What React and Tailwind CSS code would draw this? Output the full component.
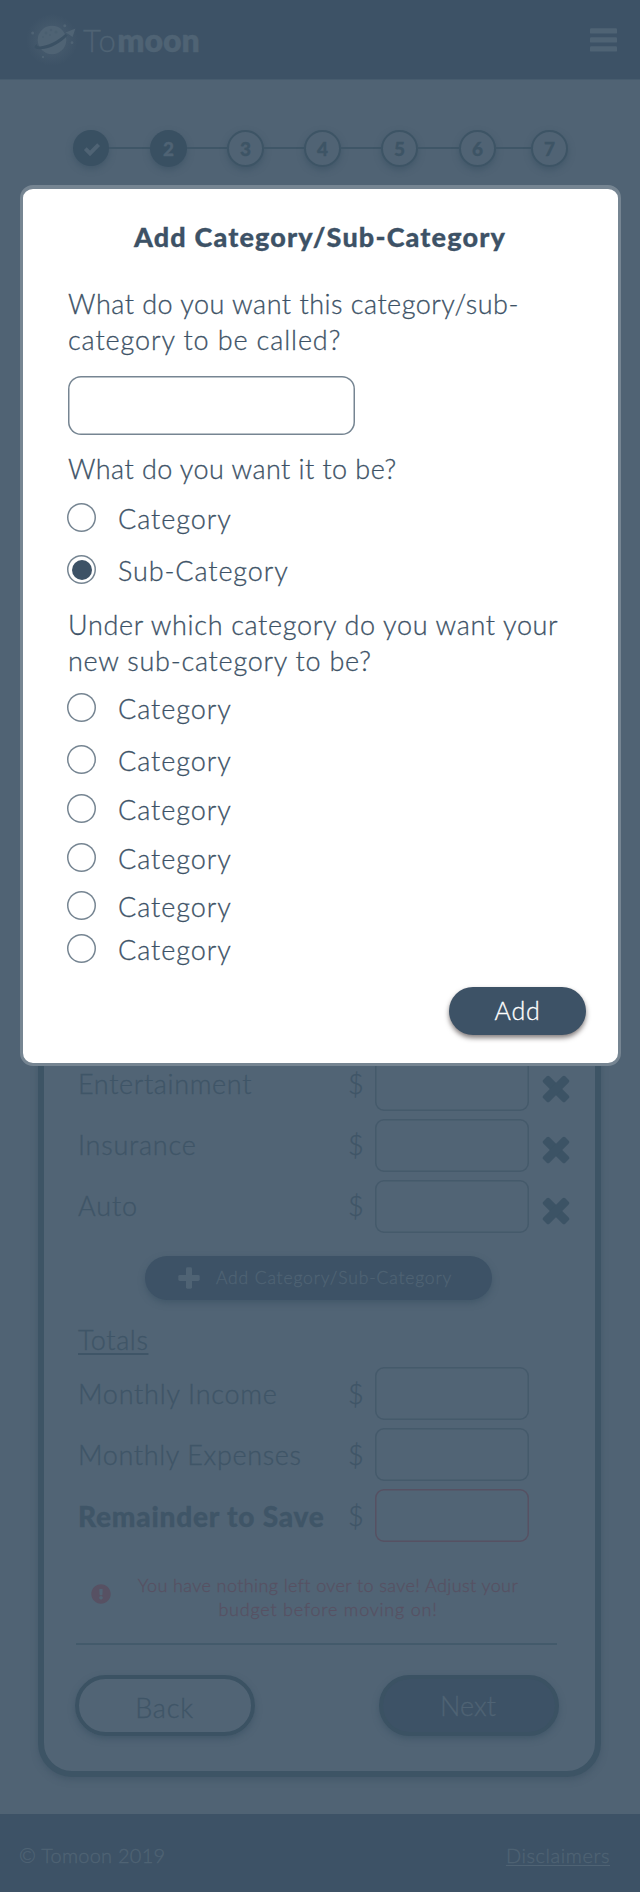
import React from "react";
import { FaExclamationCircle } from "react-icons/fa";

const steps = [
  { label: "2", line: "w-[40px]", done: true },
  { label: "3", line: "w-[40px]" },
  { label: "4", line: "w-[40px]" },
  { label: "5", line: "w-[41px]" },
  { label: "6", line: "w-[35px]" },
  { label: "7" },
];

const expenses = [
  { label: "Entertainment", tracking: "tracking-[0.65px]" },
  { label: "Insurance", tracking: "tracking-[0.75px]" },
  { label: "Auto", tracking: "tracking-[0.9px]" },
];

const totals = [
  { label: "Monthly Income", tracking: "tracking-[0.75px]" },
  { label: "Monthly Expenses", tracking: "tracking-[0.65px]" },
  { label: "Remainder to Save", tracking: "text-[28px] tracking-[0.8px] font-black", alert: true },
];

const kinds = [
  { label: "Category", spacing: "mt-[12.5px]", tracking: "tracking-[0.95px]" },
  { label: "Sub-Category", spacing: "mt-[16.5px]", tracking: "tracking-[0.88px]", checked: true },
];

const parents = [
  "mt-[11px]",
  "mt-[16px]",
  "mt-[13px]",
  "mt-[12.5px]",
  "mt-[12.5px]",
  "mt-[7px]",
];

function CheckIcon() {
  return (
    <svg width="18" height="16" viewBox="0 0 18 16" fill="none" stroke="currentColor" strokeWidth="4" className="mt-[2px] ml-[1px]">
      <path d="M2.300 7.600l4.700 4.700L15.600 3.600" strokeLinejoin="miter" />
    </svg>
  );
}

function CrossIcon() {
  return (
    <svg width="28" height="28" viewBox="0 0 28 28" fill="currentColor">
      <rect x="-1.500" y="9.700" width="31" height="8.600" rx="1.900" transform="rotate(45 14 14)" />
      <rect x="-1.500" y="9.700" width="31" height="8.600" rx="1.900" transform="rotate(-45 14 14)" />
    </svg>
  );
}

function PlusIcon() {
  return (
    <svg width="22" height="22" viewBox="0 0 22 22" fill="currentColor">
      <rect x="8" y="0.300" width="6" height="21.400" rx="1.400" />
      <rect x="0.300" y="8" width="21.400" height="6" rx="1.400" />
    </svg>
  );
}

function MenuIcon() {
  return (
    <svg width="27" height="24" viewBox="0 0 27 24" fill="currentColor">
      <rect y="0.200" width="27" height="5.400" rx="1.200" />
      <rect y="9.200" width="27" height="5.400" rx="1.200" />
      <rect y="18.200" width="27" height="5.400" rx="1.200" />
    </svg>
  );
}

function Logo() {
  return (
    <div className="flex items-center">
      <svg width="54" height="54" viewBox="0 0 54 54">
        <defs>
          <radialGradient id="glow">
            <stop offset="0.5" stopColor="#4f6374" stopOpacity="0.4" />
            <stop offset="1" stopColor="#4f6374" stopOpacity="0" />
          </radialGradient>
        </defs>
        <circle cx="27" cy="27" r="26" fill="url(#glow)" />
        <circle cx="27" cy="27" r="14.3" fill="#4f6374" />
        <g fill="#4a5f70">
          <circle cx="21" cy="20" r="1.4" />
          <circle cx="26" cy="17" r="1.2" />
          <circle cx="31" cy="19" r="1.5" />
          <circle cx="25" cy="22" r="1" />
          <circle cx="18" cy="24" r="1" />
        </g>
        <path d="M12 31c-4 3-3 5.500 4 5.200 9-.4 20-6 26.500-13.700l-2.200-1.500C33 28 22 33 15 33.500c-2.500.2-3.500-.7-3-2.500z" fill="#3b5164" />
        <path d="M40.500 19.500l10-4-3 8.500-3.500-2.500z" fill="#4f6374" />
        <g fill="#4f6374">
          <circle cx="7.700" cy="20" r="1.500" />
          <circle cx="39.800" cy="12.700" r="1.500" />
          <circle cx="47" cy="29.700" r="1.400" />
          <circle cx="18" cy="44" r="1.200" />
        </g>
      </svg>
      <span className="ml-[4px] text-[31px] leading-[38px] font-light tracking-[1.4px]">To</span>
      <span className="text-[32px] leading-[38px] font-extrabold">moon</span>
    </div>
  );
}

function Stepper() {
  return (
    <div className="mt-[49.500px] flex h-[37px] items-center pl-[73px] text-[19px] leading-none font-black text-[#3d5465]">
      <div className="flex size-[36px] items-center justify-center rounded-full bg-[#395062] text-[#4f6374] shadow-[0_3px_6px_rgba(57,80,98,0.6)]">
        <CheckIcon />
      </div>
      <div className="h-[2px] w-[41px] bg-[#3f5667]" />
      {steps.map((s) => (
        <React.Fragment key={s.label}>
          <div
            className={
              s.done
                ? "flex size-[37px] items-center justify-center rounded-full bg-[#395062] text-[#4f6374] shadow-[0_3px_6px_rgba(57,80,98,0.6)]"
                : "flex size-[37px] items-center justify-center rounded-full border-2 border-[#3d5465] bg-[#506374] shadow-[0_3px_6px_rgba(57,80,98,0.6)]"
            }
          >
            {s.label}
          </div>
          {s.line && <div className={`h-[2px] bg-[#3f5667] ${s.line}`} />}
        </React.Fragment>
      ))}
    </div>
  );
}

function MoneyRow({ label, tracking, alert, removable }) {
  return (
    <div className="flex h-[53px] items-center">
      <span className={`ml-[2px] w-[270px] shrink-0 whitespace-nowrap ${tracking}`}>{label}</span>
      <span className="w-[27px] shrink-0">$</span>
      <div
        className={
          alert
            ? "h-[53px] w-[154px] shrink-0 rounded-[9px] shadow-[inset_0_0_0_1.5px_#565163]"
            : "h-[53px] w-[154px] shrink-0 rounded-[9px] shadow-[inset_0_0_0_1.5px_#455a6b]"
        }
      />
      {removable && (
        <div className="ml-[12.500px] shrink-0 pt-[9px] text-[#3c5365]">
          <CrossIcon />
        </div>
      )}
    </div>
  );
}

function Radio({ label, checked, spacing, tracking }) {
  return (
    <label className={`flex h-9 items-center ${spacing}`}>
      <span className="-mt-[1px] flex size-[29px] items-center justify-center rounded-full shadow-[inset_0_0_0_1.5px_#768592]">
        {checked && <span className="size-5 rounded-full bg-[#3d5266]" />}
      </span>
      <span className={`ml-[22px] pt-[2px] ${tracking}`}>{label}</span>
    </label>
  );
}

function Modal() {
  return (
    <div className="absolute top-[185px] left-[20px] flex h-[881px] w-[601px] flex-col rounded-[13px] border-[3px] border-t-4 border-[#768592] bg-white pl-[44px] text-[27px] leading-9 font-light text-[#3d5266]">
      <h2 className="mt-[29.500px] -ml-[44px] pr-[1px] text-center text-[27px] leading-9 font-black tracking-[1.150px]">
        Add Category/Sub-Category
      </h2>
      <p className="mt-[31.500px] pl-[1px]">
        <span className="tracking-[0.490px]">What do you want this category/sub-</span>
        <br />
        <span className="tracking-[0.890px]">category to be called?</span>
      </p>
      <div className="mt-[18px] ml-[1px] h-[59px] w-[287px] shrink-0 rounded-[13px] shadow-[inset_0_0_0_1.5px_#768592]" />
      <p className="mt-[16px] pl-[1px] tracking-[0.440px]">What do you want it to be?</p>
      {kinds.map((k) => (
        <Radio key={k.label} {...k} />
      ))}
      <p className="mt-[19px] pl-[1px]">
        <span className="tracking-[0.660px]">Under which category do you want your</span>
        <br />
        <span className="tracking-[0.750px]">new sub-category to be?</span>
      </p>
      {parents.map((spacing, i) => (
        <Radio key={i} label="Category" spacing={spacing} tracking="tracking-[0.95px]" />
      ))}
      <button className="mt-[20px] mr-[32px] h-[48px] w-[137px] shrink-0 self-end rounded-full bg-[#3d5266] pb-[2px] text-[25px] leading-9 tracking-[0.7px] text-white shadow-[0_3px_5px_rgba(50,40,40,0.6)]">
        Add
      </button>
    </div>
  );
}

export default function App() {
  return (
    <div className="relative flex h-[1892px] w-[640px] flex-col overflow-hidden bg-[#506374] font-['Lato',sans-serif] [-webkit-text-stroke:0.3px]">
      <header className="flex h-[80px] shrink-0 items-center justify-between border-b border-[#475c6e] bg-[#3d5266] pr-[23px] pl-[25px] text-[#4f6374]">
        <Logo />
        <MenuIcon />
      </header>
      <Stepper />
      <main className="mt-[44px] ml-[38px] flex w-[563px] grow flex-col justify-end rounded-[34px] border-[6px] border-[#3d5465] bg-[#516475] pb-[35px] pl-8 text-[27px] leading-9 font-light text-[#3f5567] shadow-[0_3px_6px_rgba(57,80,98,0.5)]">
        <section className="flex flex-col gap-2">
          {expenses.map((e) => (
            <MoneyRow key={e.label} {...e} removable />
          ))}
        </section>
        <button className="mt-[23.500px] ml-[69px] flex h-[43.500px] w-[347px] items-center rounded-full bg-[#3d5266] pl-[32.500px] text-[17.500px] tracking-[0.85px] text-[#4f6374] shadow-[0_3px_6px_rgba(57,80,98,0.6)]">
          <PlusIcon />
          <span className="ml-[16.500px] whitespace-nowrap">Add Category/Sub-Category</span>
        </button>
        <h3 className="mt-[22.500px] ml-[2px] self-start tracking-[0.6px] underline decoration-2 underline-offset-[3px]">Totals</h3>
        <section className="mt-[9px] flex flex-col gap-2">
          {totals.map((t) => (
            <MoneyRow key={t.label} {...t} />
          ))}
        </section>
        <div className="mt-[30.500px] flex items-center pl-[15px] text-[#575163]">
          <FaExclamationCircle className="-mt-[7px] size-5" />
          <p className="ml-[18px] w-[398px] text-center text-[18px] leading-[24.500px]">
            <span className="tracking-[0.4px]">You have nothing left over to save! Adjust your</span>
            <br />
            <span className="tracking-[0.79px]">budget before moving on!</span>
          </p>
        </div>
        <hr className="mt-[21.500px] w-[481px] border-t-2 border-[#435a6b]" />
        <div className="mt-[30px] -ml-[1px] flex w-[484px] justify-between">
          <button className="h-[61px] w-[180px] rounded-full border-4 border-[#3b5263] pt-[4px] pr-[1px] tracking-[0.8px] shadow-[0_3px_6px_rgba(57,80,98,0.6)]">
            Back
          </button>
          <button className="h-[61px] w-[180px] rounded-full border-4 border-[#3b5263] bg-[#3d5266] pt-[1px] pr-[2px] text-[#4f6374] shadow-[0_3px_6px_rgba(57,80,98,0.6)]">
            Next
          </button>
        </div>
      </main>
      <footer className="mt-[36.500px] flex h-[78.500px] shrink-0 items-center justify-between bg-[#3d5266] pt-[5px] pr-[30px] pl-[19px] text-[20px] font-light text-[#4f6374]">
        <span className="tracking-[0.25px]">© Tomoon 2019</span>
        <a className="tracking-[0.56px] underline decoration-1 underline-offset-2">Disclaimers</a>
      </footer>
      <Modal />
    </div>
  );
}
